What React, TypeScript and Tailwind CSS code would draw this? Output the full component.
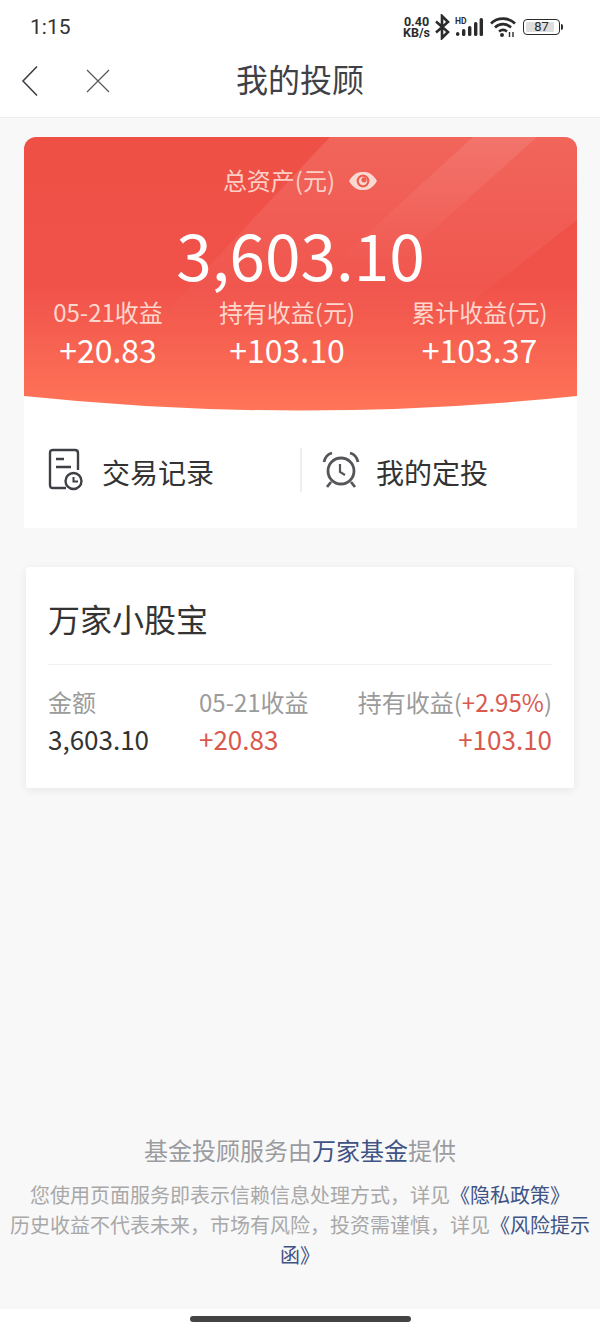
function BackIcon() {
  return (
    <svg width="20" height="32" viewBox="0 0 20 32" fill="none" stroke="#3f4147" strokeWidth="1.6">
      <path d="M17 1.5 L3 16 L17 30.5" />
    </svg>
  );
}

function CloseIcon() {
  return (
    <svg width="26" height="26" viewBox="0 0 26 26" fill="none" stroke="#55575c" strokeWidth="1.2">
      <path d="M2 2 L24 24 M24 2 L2 24" />
    </svg>
  );
}

function StatusIcons() {
  return (
    <div className="flex items-center">
      <div className="flex flex-col items-center text-[12.5px] leading-[11px] font-bold text-[#2b2b2b] font-['Roboto',sans-serif]">
        <span>0.40</span>
        <span>KB/s</span>
      </div>
      <svg className="ml-[5px]" width="15" height="26" viewBox="0 0 15 26" fill="none" stroke="#2b2b2b" strokeWidth="2.6">
        <path d="M1 7.5 L13 18 L7 24 V2 L13 8 L1 18.5" />
      </svg>
      <svg className="ml-[5px]" width="28" height="20" viewBox="0 0 28 20">
        <text x="0" y="7" fontSize="8.5" fontWeight="700" fill="#2b2b2b" fontFamily="Roboto">HD</text>
        <rect x="1" y="15" width="3.4" height="4" rx="1.7" fill="#2b2b2b" />
        <rect x="7" y="12" width="3.4" height="7" rx="1.5" fill="#2b2b2b" />
        <rect x="13" y="9" width="3.4" height="10" rx="1.5" fill="#2b2b2b" />
        <rect x="19" y="5" width="3.4" height="14" rx="1.5" fill="#2b2b2b" />
        <rect x="24.6" y="1" width="3.4" height="18" rx="1.5" fill="#2b2b2b" />
      </svg>
      <svg className="ml-[7px]" width="26" height="22" viewBox="0 0 26 22" fill="none" stroke="#2b2b2b" strokeWidth="2.6">
        <path d="M1 7.5 C7.5 1 18.5 1 25 7.5" />
        <path d="M5 11.5 C9.5 7 16.5 7 21 11.5" />
        <path d="M9 15.5 C11.5 13.5 14.5 13.5 17 15.5" />
        <circle cx="12" cy="19" r="2" fill="#2b2b2b" stroke="none" />
        <path d="M19.5 21 V16 M23 21 V16" strokeWidth="1.4" />
      </svg>
      <div className="relative ml-[7px] flex h-[16px] w-[37px] items-center rounded-[4px] border border-[#2b2b2b]">
        <div className="absolute left-[2px] top-[2px] h-[10px] w-[28px] rounded-[1px] bg-[#dedede]" />
        <span className="relative w-full text-center text-[13px] leading-[14px] text-[#2b2b2b] font-['Roboto',sans-serif]">87</span>
      </div>
      <div className="ml-[1px] h-[6px] w-[2px] rounded-r-sm bg-[#2b2b2b]" />
    </div>
  );
}

function EyeIcon() {
  return (
    <svg width="30" height="20" viewBox="0 0 30 20">
      <path d="M1 10 C6 2 10 1 15 1 C20 1 24 2 29 10 C24 18 20 19 15 19 C10 19 6 18 1 10 Z" fill="#fbd9d3" />
      <circle cx="15" cy="10" r="6.4" fill="#ef5f50" />
      <circle cx="15" cy="10" r="4.2" fill="#fbd9d3" />
      <circle cx="16" cy="8.8" r="2.6" fill="#ef5f50" />
    </svg>
  );
}

// red panel with the diagonal light bands, they fade out towards the numbers
function HeroBackground() {
  return (
    <svg className="absolute inset-0 h-full w-full" viewBox="0 0 553 274" preserveAspectRatio="none">
      <defs>
        <linearGradient id="hero" x1="0" y1="0" x2="0" y2="1">
          <stop offset="0" stopColor="#ef5045" />
          <stop offset="0.55" stopColor="#f0524a" />
          <stop offset="1" stopColor="#ff7559" />
        </linearGradient>
        <linearGradient id="glow" gradientUnits="userSpaceOnUse" x1="0" y1="0" x2="0" y2="190">
          <stop offset="0" stopColor="#ffffff" stopOpacity="0.12" />
          <stop offset="1" stopColor="#ffffff" stopOpacity="0" />
        </linearGradient>
        <linearGradient id="band" gradientUnits="userSpaceOnUse" x1="0" y1="0" x2="0" y2="130">
          <stop offset="0" stopColor="#ffffff" stopOpacity="0.1" />
          <stop offset="1" stopColor="#ffffff" stopOpacity="0" />
        </linearGradient>
      </defs>
      <path d="M0 0 H553 V259 Q276 288 0 259 Z" fill="url(#hero)" />
      <path d="M306 0 H553 V83 L416 190 H128 Z" fill="url(#glow)" />
      <path d="M449 0 H513 L368 130 H307 Z" fill="url(#band)" />
    </svg>
  );
}

function Stat({ label, value }: { label: string; value: string }) {
  return (
    <div className="flex flex-col items-center">
      <span className="text-[24px] leading-[34px] text-[#fdd6cd]">{label}</span>
      <span className="text-[32px] leading-[40px] text-white">{value}</span>
    </div>
  );
}

function ActionRecordIcon() {
  return (
    <svg width="36" height="44" viewBox="0 0 36 44" fill="none" stroke="#3f4045" strokeWidth="2.4">
      <path d="M18 40 H5 C3 40 2 39 2 37 V5 C2 3 3 2 5 2 H27 C29 2 30 3 30 5 V22" />
      <path d="M8 11 H16 M8 19 H23" />
      <circle cx="25.5" cy="33" r="8" />
      <path d="M25.5 29 V33.5 H30" strokeWidth="2" />
    </svg>
  );
}

function ActionAlarmIcon() {
  return (
    <svg width="38" height="40" viewBox="0 0 38 40" fill="none" stroke="#55565a" strokeWidth="2.8">
      <circle cx="19" cy="21" r="13" />
      <path d="M2 12 C3 7 6 4 10 3 M36 12 C35 7 32 4 28 3" />
      <path d="M18 14 V22 L23 25" strokeWidth="2.2" />
      <path d="M9 32 L5 37 M29 32 L33 37" />
    </svg>
  );
}

export default function App() {
  return (
    <div className="flex h-[1333px] w-[600px] flex-col overflow-hidden bg-[#f8f8f8] font-['Noto_Sans_CJK_SC',sans-serif]">
      <div className="flex h-[44px] items-center justify-between bg-white pl-[30px] pr-[37px] pt-[10px]">
        <span className="text-[21px] leading-[28px] text-[#333] font-['Roboto',sans-serif]">1:15</span>
        <StatusIcons />
      </div>

      <div className="relative flex h-[74px] items-center justify-center border-b border-[#eeeeee] bg-white pb-[6px]">
        <div className="absolute left-[20px] top-[21px]"><BackIcon /></div>
        <div className="absolute left-[85px] top-[24px]"><CloseIcon /></div>
        <span className="text-[32px] leading-[44px] text-[#3f4147]">我的投顾</span>
      </div>

      <div className="ml-[24px] mr-[23px] mt-[19px] h-[391px] overflow-hidden rounded-t-[12px] bg-white">
        <div className="relative h-[274px]">
          <HeroBackground />
          <div className="relative flex flex-col items-center pt-[26px]">
            <div className="flex items-center text-[#fbcfc6]">
              <span className="text-[24px] leading-[34px]">总资产(元)</span>
              <span className="ml-[13px] mt-[1px]"><EyeIcon /></span>
            </div>
            <div className="mt-[17px] h-[78px] text-[64px] leading-[78px] text-white">3,603.10</div>
          </div>
          <div className="relative mt-[3px] grid grid-cols-[168px_190px_1fr]">
            <Stat label="05-21收益" value="+20.83" />
            <Stat label="持有收益(元)" value="+103.10" />
            <Stat label="累计收益(元)" value="+103.37" />
          </div>
        </div>
        <div className="flex h-[117px] items-center">
          <div className="flex flex-1 items-center pl-[24px]">
            <ActionRecordIcon />
            <span className="ml-[18px] pt-[5px] text-[28px] leading-[40px] text-[#333333]">交易记录</span>
          </div>
          <div className="h-[44px] w-[2px] bg-[#eeeeee]" />
          <div className="flex w-[275px] items-center pl-[20px]">
            <ActionAlarmIcon />
            <span className="ml-[16px] pt-[5px] text-[28px] leading-[40px] text-[#333333]">我的定投</span>
          </div>
        </div>
      </div>

      <div className="mx-[26px] mt-[39px] h-[221px] rounded-[3px] bg-white px-[22px] shadow-[0_2px_10px_rgba(0,0,0,0.07)]">
        <div className="flex h-[98px] items-center border-b border-[#f0f0f0] pt-[4px]">
          <span className="text-[32px] leading-[44px] text-[#333333]">万家小股宝</span>
        </div>
        <div className="grid grid-cols-[151px_1fr_auto] pt-[19px]">
          <div className="flex flex-col">
            <span className="text-[24px] leading-[36px] text-[#9b9b9b]">金额</span>
            <span className="text-[26px] leading-[38px] text-[#333333]">3,603.10</span>
          </div>
          <div className="flex flex-col">
            <span className="text-[24px] leading-[36px] text-[#9b9b9b]">05-21收益</span>
            <span className="text-[26px] leading-[38px] text-[#d9594e]">+20.83</span>
          </div>
          <div className="flex flex-col items-end">
            <span className="text-[24px] leading-[36px] text-[#9b9b9b]">持有收益(<span className="text-[#d9594e]">+2.95%</span>)</span>
            <span className="text-[26px] leading-[38px] text-[#d9594e]">+103.10</span>
          </div>
        </div>
      </div>

      <div className="flex-1" />

      <div className="flex flex-col items-center px-[10px] pb-[39px] text-center text-[#a8a8a8]">
        <p className="text-[24px] leading-[34px] text-[#9a9ca0]">基金投顾服务由<span className="text-[#3f5385]">万家基金</span>提供</p>
        <p className="mt-[13px] text-[20px] leading-[30px]">
          您使用页面服务即表示信赖信息处理方式，详见<span className="text-[#3f5385]">《隐私政策》</span>
          <br />
          历史收益不代表未来，市场有风险，投资需谨慎，详见<span className="text-[#3f5385]">《风险提示函》</span>
        </p>
      </div>

      <div className="flex h-[24px] justify-center bg-white pt-[7px]">
        <div className="h-[6px] w-[221px] rounded-full bg-[#444444]" />
      </div>
    </div>
  );
}
